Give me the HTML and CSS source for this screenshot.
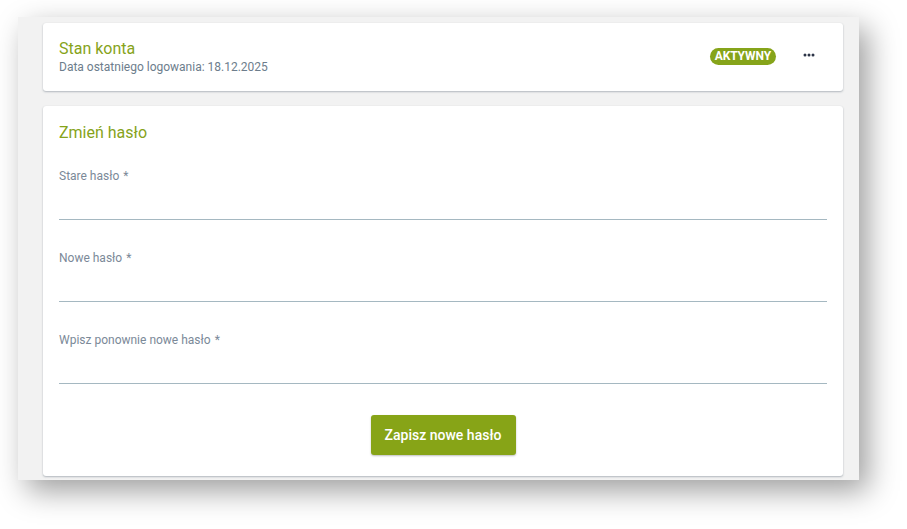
FILE: index.html
```html
<!DOCTYPE html>
<html lang="pl">
<head>
<meta charset="utf-8">
<title>Konto</title>
<link rel="stylesheet" href="styles.css">
</head>
<body>
<div class="frame">
  <section class="card status-card">
    <div class="status-text">
      <h2 class="card-title">Stan konta</h2>
      <div class="subtitle">Data ostatniego logowania: 18.12.2025</div>
    </div>
    <div class="status-actions">
      <span class="badge">AKTYWNY</span>
      <button class="more" aria-label="Więcej">
        <svg width="12" height="4" viewBox="0 0 12 4"><circle cx="2" cy="2" r="1.5"/><circle cx="6" cy="2" r="1.5"/><circle cx="10" cy="2" r="1.5"/></svg>
      </button>
    </div>
  </section>
  <section class="card form-card">
    <h2 class="card-title">Zmień hasło</h2>
    <div class="fields">
      <label class="field">
        <span class="label">Stare hasło<span class="req">*</span></span>
        <input class="input" type="password">
      </label>
      <label class="field">
        <span class="label">Nowe hasło<span class="req">*</span></span>
        <input class="input" type="password">
      </label>
      <label class="field">
        <span class="label">Wpisz ponownie nowe hasło<span class="req">*</span></span>
        <input class="input" type="password">
      </label>
    </div>
    <div class="actions">
      <button class="primary">Zapisz nowe hasło</button>
    </div>
  </section>
</div>
</body>
</html>
```
FILE: styles.css
```css
* { box-sizing: border-box; }
html, body { margin: 0; padding: 0; background: #ffffff; }
body {
  font-family: Roboto, "Noto Sans", Arial, sans-serif;
  width: 907px;
  height: 529px;
  overflow: hidden;
}
.frame {
  margin: 17px 0 0 18px;
  width: 841px;
  height: 463px;
  background: #f2f2f2;
  padding: 6px 16px 0 25px;
  box-shadow: 9px 11px 28px rgba(0, 0, 0, 0.38);
  display: flex;
  flex-direction: column;
  gap: 15px;
}
.card {
  background: #ffffff;
  border-radius: 3px;
  box-shadow: 0 1px 2px rgba(60, 75, 95, 0.35), 0 0 1px rgba(0,0,0,0.08);
}
.card-title {
  margin: 0;
  font-size: 16px;
  line-height: 19px;
  font-weight: 400;
  color: #86a31a;
}
.status-card {
  height: 68px;
  padding: 16px 0 0 16px;
  display: flex;
  justify-content: space-between;
}
.subtitle {
  margin-top: 2px;
  font-size: 12px;
  line-height: 14px;
  color: #6d7d8c;
}
.status-actions {
  display: flex;
  align-items: flex-start;
  padding-top: 9px;
}
.badge {
  display: inline-block;
  height: 17px;
  line-height: 17px;
  padding: 0 5px;
  margin-left: 1px;
  border-radius: 9px;
  background: #86a41a;
  color: #ffffff;
  font-size: 12px;
  font-weight: 700;
  letter-spacing: -0.1px;
}
.more {
  border: 0;
  background: none;
  padding: 0;
  margin: 5px 28px 0 27px;
  width: 12px;
  height: 4px;
  display: block;
}
.more svg { display: block; fill: #2c3447; }
.form-card {
  height: 370px;
  padding: 17px 16px 0 16px;
}
.fields {
  margin-top: 27px;
  display: flex;
  flex-direction: column;
  gap: 31px;
}
.field { display: block; }
.label {
  display: block;
  font-size: 12px;
  line-height: 14px;
  color: #7b8998;
}
.req { margin-left: 4px; }
.input {
  display: block;
  width: 100%;
  height: 37px;
  border: 0;
  border-bottom: 1px solid #a5b8c1;
  background: transparent;
  outline: none;
  font: inherit;
}
.actions {
  margin-top: 31px;
  display: flex;
  justify-content: center;
}
.primary {
  height: 40px;
  width: 145px;
  border: 0;
  border-radius: 3px;
  background: #87a417;
  color: #ffffff;
  font-family: Roboto, "Noto Sans", Arial, sans-serif;
  font-size: 14px;
  font-weight: 500;
  box-shadow: 0 1px 2px rgba(0,0,0,0.25);
  cursor: pointer;
}
```
